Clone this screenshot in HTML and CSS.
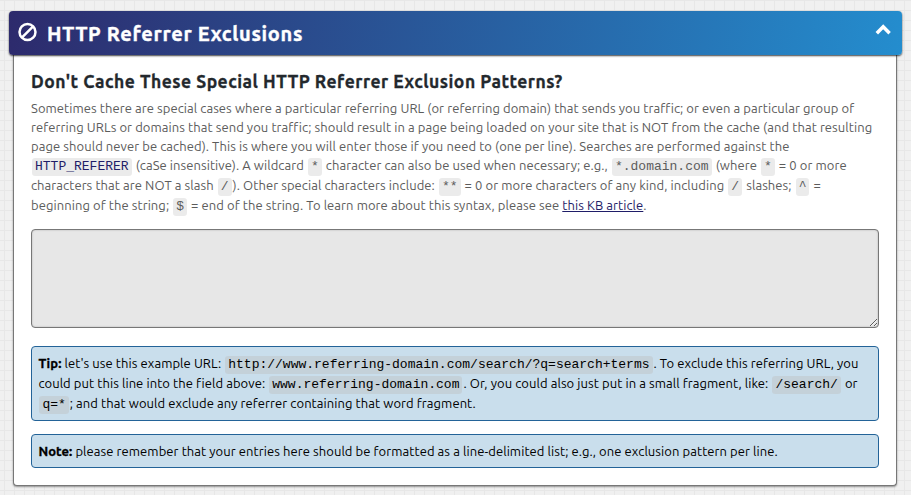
FILE: index.html
```html
<!DOCTYPE html>
<html lang="en">
<head>
<meta charset="utf-8">
<title>HTTP Referrer Exclusions</title>
<link rel="stylesheet" href="styles.css">
</head>
<body>
<section class="panel">
  <header class="panel-heading">
    <svg class="ban" viewBox="0 0 20 20"><circle cx="9.5" cy="10" r="8"/><path d="M4.1 15.4 14.9 4.6"/></svg>
    <h1>HTTP Referrer Exclusions</h1>
    <svg class="chevron" viewBox="0 0 16 12"><path d="M1.8 9.2 8.2 2.8l6.4 6.4"/></svg>
  </header>
  <div class="panel-body">
    <h2>Don't Cache These Special HTTP Referrer Exclusion Patterns?</h2>
    <p class="intro">
      <span class="line">Sometimes there are special cases where a particular referring URL (or referring domain) that sends you traffic; or even a particular group of</span>
      <span class="line">referring URLs or domains that send you traffic; should result in a page being loaded on your site that is NOT from the cache (and that resulting</span>
      <span class="line">page should never be cached). This is where you will enter those if you need to (one per line). Searches are performed against the</span>
      <span class="line tall"><code class="link">HTTP_REFERER</code> (caSe insensitive). A wildcard <code>*</code> character can also be used when necessary; e.g., <code>*.domain.com</code> (where <code>*</code> = 0 or more</span>
      <span class="line tall">characters that are NOT a slash <code>/</code>). Other special characters include: <code>**</code> = 0 or more characters of any kind, including <code>/</code> slashes; <code>^</code> =</span>
      <span class="line tall">beginning of the string; <code>$</code> = end of the string. To learn more about this syntax, please see <a href="#">this KB article</a>.</span>
    </p>
    <textarea aria-label="Exclusion patterns" spellcheck="false"></textarea>
    <p class="info">
      <span class="line tall"><b>Tip:</b> let's use this example URL: <code>http://www.referring-domain.com/search/?q=search+terms</code>. To exclude this referring URL, you</span>
      <span class="line tall">could put this line into the field above: <code>www.referring-domain.com</code>. Or, you could also just put in a small fragment, like: <code>/search/</code> or</span>
      <span class="line tall"><code>q=*</code>; and that would exclude any referrer containing that word fragment.</span>
    </p>
    <p class="info note">
      <span class="line tall"><b>Note:</b> please remember that your entries here should be formatted as a line-delimited list; e.g., one exclusion pattern per line.</span>
    </p>
  </div>
</section>
</body>
</html>
```
FILE: styles.css
```css
* { box-sizing: border-box; }
body {
  margin: 0;
  height: 495px;
  overflow: hidden;
  padding: 11px 9px 0;
  font-family: Ubuntu, "Noto Sans", sans-serif;
  font-size: 13px;
  background-color: #f0f0f0;
  background-image: linear-gradient(90deg, #e7e7e7 1px, transparent 1px), linear-gradient(#e7e7e7 1px, transparent 1px);
  background-size: 10px 10px;
  background-position: 4px 0;
}
.panel { width: 893px; }
.panel-heading {
  position: relative;
  display: flex;
  align-items: center;
  height: 44px;
  padding: 0 11px 0 9px;
  border-radius: 4px;
  color: #fff;
  background: linear-gradient(100deg, #2d2a6c, #248dce);
  box-shadow: 0 1px 2px rgba(0, 0, 0, .75);
}
.ban, .chevron { fill: none; stroke: #fff; }
.ban { width: 20px; height: 20px; stroke-width: 2.5; margin-top: -2px; }
.chevron { width: 16px; height: 12px; stroke-width: 3.5; margin: -7px 0 0 auto; }
h1 { margin: 1px 0 0 9px; font-size: 20px; line-height: 28px; font-weight: 700; letter-spacing: .69px; -webkit-text-stroke: .4px; white-space: nowrap; }
.panel-body {
  width: 884px;
  height: 431px;
  margin-left: 4px;
  padding: 14px 17px 0;
  background: #fff;
  border: 1px solid #777;
  border-top: 0;
  border-radius: 0 0 4px 4px;
  box-shadow: 0 1px 2px rgba(0, 0, 0, .4);
}
h2 { margin: 0; font-size: 17.5px; line-height: 26px; color: #23282d; letter-spacing: .49px; -webkit-text-stroke: .3px; white-space: nowrap; }
p { margin: 0; }
.intro { padding-top: 4px; color: #5c5c5c; }
.line { display: block; height: 19px; line-height: 19px; letter-spacing: .072px; white-space: nowrap; }
.line.tall { height: 20px; line-height: 18px; }
b { -webkit-text-stroke: .3px; }
code {
  margin: 0 1px;
  padding: 1px 3px 2px;
  border-radius: 3px;
  font: 13px "Liberation Mono", monospace;
  letter-spacing: 0;
  background: rgba(0, 0, 0, .08);
}
.info code { background: rgba(190, 190, 190, .4); }
.link, a { color: #1f1d68; }
textarea {
  display: block;
  width: 848px;
  height: 99px;
  margin-top: 13px;
  border: 1px solid #777;
  border-radius: 4px;
  background: #e7e7e7;
  box-shadow: inset 0 0 2px rgba(0, 0, 0, .25);
  resize: both;
}
.info {
  width: 848px;
  height: 75px;
  margin-top: 18px;
  padding: 7px 6.4px;
  color: #000;
  background: #c9deec;
  border: 1px solid #236398;
  border-radius: 4px;
}
.note { height: 34px; margin-top: 13px; }
```
